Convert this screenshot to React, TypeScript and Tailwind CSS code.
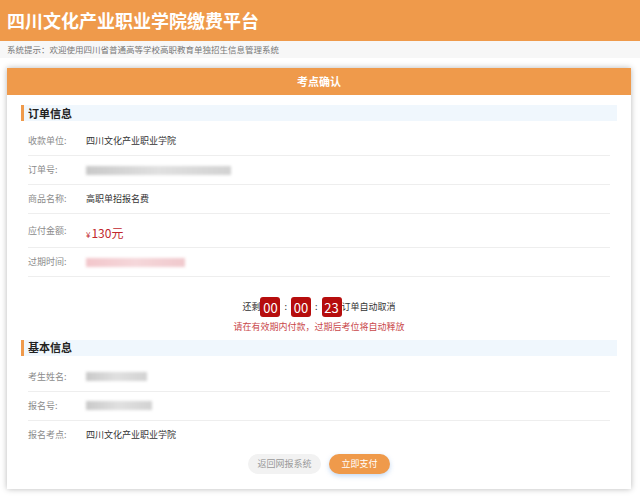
import React from 'react';

const font = { fontFamily: '"Noto Sans CJK SC", "Noto Sans", sans-serif' };

const Row = ({ label, children, tall, last }: { label: string; children: React.ReactNode; tall?: boolean; last?: boolean }) => (
    <div className={`flex items-center mx-[7px] ${tall ? 'h-[34px]' : 'h-[29px]'} ${last ? '' : 'border-b border-[#eeeeee]'}`}>
        <div className="w-[58px] text-[9px] text-[#8c8c8c]">{label}</div>
        <div className="flex-1 text-[9px] text-[#333]">{children}</div>
    </div>
);

const Blur = ({ w, tone }: { w: number; tone: 'gray' | 'pink' }) => (
    <div className="flex items-center h-[12px]" style={{ width: w }}>
        <div
            className={`h-[9px] w-full blur-[1.5px] ${tone === 'pink' ? 'bg-gradient-to-r from-[#f2c6cb] via-[#f5d7da] to-[#f0c9cd]' : 'bg-gradient-to-r from-[#c9c9c9] via-[#e0e0e0] to-[#d2d2d2]'}`}
        />
    </div>
);

const SectionTitle = ({ text }: { text: string }) => (
    <div className="flex items-center h-[16px] bg-[#f0f7fd] border-l-[3px] border-[#ef9a4b] pl-[4px]">
        <span className="text-[11px] font-bold text-[#222]">{text}</span>
    </div>
);

const TimeBox = ({ v }: { v: string }) => (
    <span className="inline-flex items-center justify-center w-[20px] h-[20px] rounded-[3px] bg-[#b60d0d] text-white text-[13px] leading-none">{v}</span>
);

export default function App() {
    return (
        <div className="w-[640px] h-[499px] bg-white overflow-hidden" style={font}>
            <div className="h-[41px] bg-[#ef9a4b] flex items-center px-[7px]">
                <h1 className="text-[18px] font-bold text-white tracking-[0px]">四川文化产业职业学院缴费平台</h1>
            </div>
            <div className="h-[17px] bg-[#f7f7f7] flex items-center px-[7px] text-[8.5px] text-[#777]">
                系统提示：欢迎使用四川省普通高等学校高职教育单独招生信息管理系统
            </div>

            <div className="mt-[10px] ml-[7px] w-[624px] bg-white shadow-[0_0_6px_rgba(0,0,0,0.28)]">
                <div className="h-[27px] bg-[#ef9a4b] flex items-center justify-center text-white text-[11px] font-bold">
                    考点确认
                </div>
                <div className="px-[14px] pt-[10px] pb-[15px]">
                    <SectionTitle text="订单信息" />
                    <div className="mt-[6px]">
                        <Row label="收款单位:">四川文化产业职业学院</Row>
                        <Row label="订单号:"><Blur w={145} tone="gray" /></Row>
                        <Row label="商品名称:">高职单招报名费</Row>
                        <Row label="应付金额:" tall>
                            <span className="text-[#c1272d] pt-[4px] inline-block">
                                <span className="text-[8px]">¥</span>
                                <span className="text-[12px] ml-[1px]">130元</span>
                            </span>
                        </Row>
                        <Row label="过期时间:"><Blur w={99} tone="pink" /></Row>
                    </div>

                    <div className="mt-[20px] flex items-center justify-center text-[9px] text-[#333]">
                        <span>还剩</span>
                        <TimeBox v="00" />
                        <span className="mx-[4px]">:</span>
                        <TimeBox v="00" />
                        <span className="mx-[4px]">:</span>
                        <TimeBox v="23" />
                        <span>订单自动取消</span>
                    </div>
                    <div className="mt-[3px] text-center text-[9px] text-[#c9474a]">
                        请在有效期内付款，过期后考位将自动释放
                    </div>

                    <div className="mt-[6px]">
                        <SectionTitle text="基本信息" />
                    </div>
                    <div className="mt-[7px]">
                        <Row label="考生姓名:"><Blur w={61} tone="gray" /></Row>
                        <Row label="报名号:"><Blur w={66} tone="gray" /></Row>
                        <Row label="报名考点:" last>四川文化产业职业学院</Row>
                    </div>

                    <div className="mt-[4px] flex justify-center gap-[8px]">
                        <button className="w-[73px] h-[20px] rounded-full bg-[#f2f2f2] text-[9px] text-[#999]">返回网报系统</button>
                        <button className="w-[61px] h-[20px] rounded-full bg-[#ef9a4b] text-[9px] text-white shadow-[0_2px_5px_rgba(120,170,230,0.45)]">立即支付</button>
                    </div>
                </div>
            </div>
        </div>
    );
}
